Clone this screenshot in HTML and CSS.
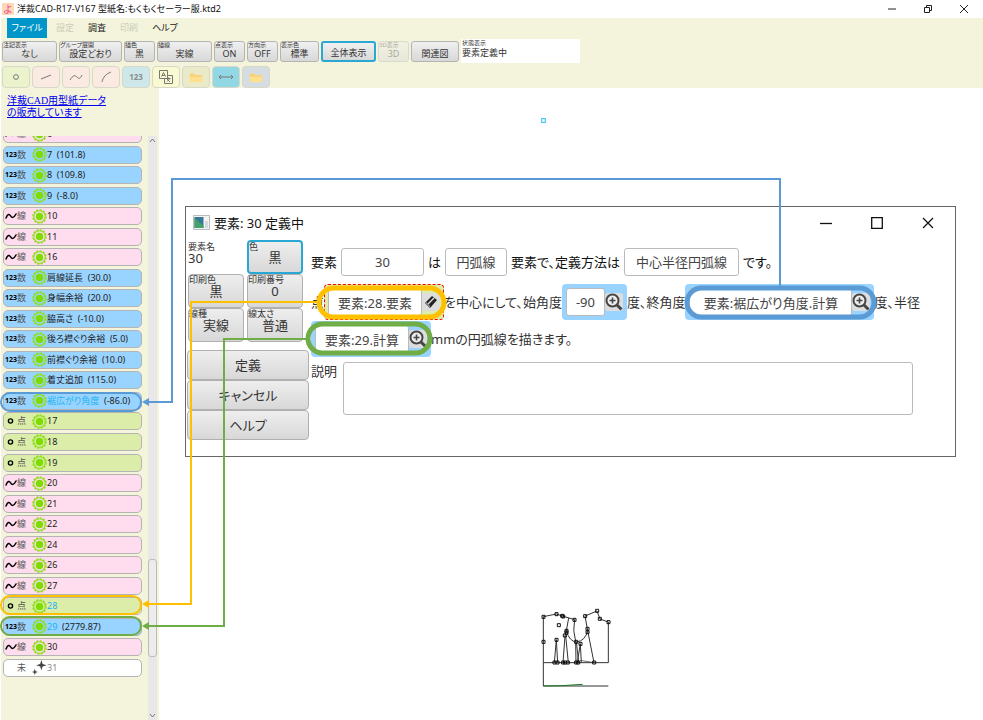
FILE: index.html
```
<!DOCTYPE html>
<html lang="ja">
<head>
<meta charset="utf-8">
<title>洋裁CAD-R17-V167</title>
<link rel="stylesheet" href="styles.css">
</head>
<body>
<svg class="defs" aria-hidden="true">
  <defs>
    <symbol id="gear" viewBox="0 0 16 16">
      <circle cx="8" cy="8" r="7" fill="none" stroke="#8fdf20" stroke-width="1.6" stroke-dasharray="2.200 1.465"/>
      <circle cx="8" cy="8" r="6.1" fill="none" stroke="#8fdf20" stroke-width="1.2"/>
      <circle cx="8" cy="8" r="4" fill="#80dc00"/>
    </symbol>
    <symbol id="wave" viewBox="0 0 12 8">
      <path d="M1 6 C2.6 1.8 4.2 1.6 5.6 3.8 S8.6 6.4 11 2" fill="none" stroke="currentColor" stroke-width="1.5" stroke-linecap="round"/>
    </symbol>
    <symbol id="dot" viewBox="0 0 12 8">
      <circle cx="5.5" cy="4" r="2.1" fill="none" stroke="currentColor" stroke-width="1.4"/>
    </symbol>
    <symbol id="spark" viewBox="0 0 16 16">
      <path d="M10 0 L11.3 4.2 L15.5 5.5 L11.3 6.8 L10 11 L8.7 6.8 L4.5 5.5 L8.7 4.2Z M3 9.4 L3.9 11.9 L6.4 12.8 L3.9 13.7 L3 16 L2.1 13.7 L0 12.8 L2.1 11.9Z" fill="#444"/>
    </symbol>
    <symbol id="zoomin" viewBox="0 0 18 18">
      <circle cx="7.5" cy="7.5" r="6" fill="#eee" stroke="#454545" stroke-width="2"/>
      <path d="M7.5 4.5v6M4.5 7.5h6" stroke="#454545" stroke-width="1.6"/>
      <path d="M12 12l4.5 4.5" stroke="#454545" stroke-width="3"/>
    </symbol>
    <symbol id="folder" viewBox="0 0 16 12">
      <path d="M1 1.500h5l1.2 1.500H14a1 1 0 0 1 1 1V10a1 1 0 0 1-1 1H2a1 1 0 0 1-1-1z" fill="#f8d27a"/>
      <path d="M1 5h14v5a1 1 0 0 1-1 1H2a1 1 0 0 1-1-1z" fill="#ffe08c"/>
    </symbol>
  </defs>
</svg>

<header class="titlebar">
  <span class="logo">よ</span>
  <h1>洋裁CAD-R17-V167 型紙名:もくもくセーラー服.ktd2</h1>
  <div class="wincontrols">
    <button aria-label="最小化"><svg viewBox="0 0 10 10"><path d="M1 5h8"/></svg></button>
    <button aria-label="元に戻す"><svg viewBox="0 0 10 10"><path d="M1.500 3.500h5v5h-5zM3.500 3.500v-2h5v5h-2"/></svg></button>
    <button aria-label="閉じる"><svg viewBox="0 0 10 10"><path d="M1 1l8 8M9 1l-8 8"/></svg></button>
  </div>
</header>

<div class="commands">
  <nav class="menu">
    <button class="current">ファイル</button>
    <button disabled>設定</button>
    <button>調査</button>
    <button disabled>印刷</button>
    <button>ヘルプ</button>
  </nav>
  <div class="options">
    <button class="opt w55"><small>注記表示</small>なし</button>
    <button class="opt w63"><small>グループ展開</small>設定どおり</button>
    <button class="opt w31"><small>描色</small>黒</button>
    <button class="opt w55"><small>描線</small>実線</button>
    <button class="opt w31"><small>点表示</small>ON</button>
    <button class="opt w31"><small>方向示</small>OFF</button>
    <button class="opt w39"><small>表示色</small>標準</button>
    <button class="opt w55 focus">全体表示</button>
    <button class="opt w31" disabled><small>3D表示</small>3D</button>
    <button class="opt w47">関連図</button>
    <div class="status"><small>状態表示</small>要素定義中</div>
  </div>
  <div class="tools">
    <button class="t-green" aria-label="点"><svg viewBox="0 0 20 16"><circle cx="10" cy="8" r="2.400"/></svg></button>
    <button class="t-pink" aria-label="直線"><svg viewBox="0 0 20 16"><path d="M5 10l10-4"/></svg></button>
    <button class="t-pink" aria-label="曲線"><svg viewBox="0 0 20 16"><path d="M4 11c3-5 5-5 7-3s3 2 5-2"/></svg></button>
    <button class="t-pink" aria-label="円弧"><svg viewBox="0 0 20 16"><path d="M6 13c1-5 4-8 9-10"/></svg></button>
    <button class="t-blue">123</button>
    <button class="t-yellow" aria-label="文字"><svg viewBox="0 0 20 16"><path d="M3.500 1.500h8v8h-8zM11.500 6.500h5v8h-8v-5M5.500 7.500l2-4 2 4M6 6.500h3M10.500 9.500h4M12.500 8.500v1M11 12.500l3-3M11 10l3 3"/></svg></button>
    <button class="t-olive" aria-label="開く"><svg><use href="#folder"/></svg></button>
    <button class="t-cyan" aria-label="寸法"><svg viewBox="0 0 20 16"><path d="M3 8h14M5 6L3 8l2 2M15 6l2 2-2 2"/></svg></button>
    <button class="t-gray" aria-label="フォルダー"><svg><use href="#folder"/></svg></button>
  </div>
</div>

<main class="workspace">
  <aside class="sidebar">
    <a class="promo" href="#">洋裁CAD用型紙データ<br>の販売しています</a>
    <div class="listarea">
      <ul class="elements">
        <li class="line"><svg class="kind"><use href="#wave"/></svg><i>線</i><svg class="gear"><use href="#gear"/></svg>6</li>
        <li class="num"><b>123</b><i>数</i><svg class="gear"><use href="#gear"/></svg>7  (101.8)</li>
        <li class="num"><b>123</b><i>数</i><svg class="gear"><use href="#gear"/></svg>8  (109.8)</li>
        <li class="num"><b>123</b><i>数</i><svg class="gear"><use href="#gear"/></svg>9  (-8.0)</li>
        <li class="line"><svg class="kind"><use href="#wave"/></svg><i>線</i><svg class="gear"><use href="#gear"/></svg>10</li>
        <li class="line"><svg class="kind"><use href="#wave"/></svg><i>線</i><svg class="gear"><use href="#gear"/></svg>11</li>
        <li class="line"><svg class="kind"><use href="#wave"/></svg><i>線</i><svg class="gear"><use href="#gear"/></svg>16</li>
        <li class="num"><b>123</b><i>数</i><svg class="gear"><use href="#gear"/></svg>肩線延長  (30.0)</li>
        <li class="num"><b>123</b><i>数</i><svg class="gear"><use href="#gear"/></svg>身幅余裕  (20.0)</li>
        <li class="num"><b>123</b><i>数</i><svg class="gear"><use href="#gear"/></svg>脇高さ  (-10.0)</li>
        <li class="num"><b>123</b><i>数</i><svg class="gear"><use href="#gear"/></svg>後ろ襟ぐり余裕  (5.0)</li>
        <li class="num"><b>123</b><i>数</i><svg class="gear"><use href="#gear"/></svg>前襟ぐり余裕  (10.0)</li>
        <li class="num"><b>123</b><i>数</i><svg class="gear"><use href="#gear"/></svg>着丈追加  (115.0)</li>
        <li class="num"><b>123</b><i>数</i><svg class="gear"><use href="#gear"/></svg><em>裾広がり角度</em>  (-86.0)</li>
        <li class="point"><svg class="kind"><use href="#dot"/></svg><i>点</i><svg class="gear"><use href="#gear"/></svg>17</li>
        <li class="point"><svg class="kind"><use href="#dot"/></svg><i>点</i><svg class="gear"><use href="#gear"/></svg>18</li>
        <li class="point"><svg class="kind"><use href="#dot"/></svg><i>点</i><svg class="gear"><use href="#gear"/></svg>19</li>
        <li class="line"><svg class="kind"><use href="#wave"/></svg><i>線</i><svg class="gear"><use href="#gear"/></svg>20</li>
        <li class="line"><svg class="kind"><use href="#wave"/></svg><i>線</i><svg class="gear"><use href="#gear"/></svg>21</li>
        <li class="line"><svg class="kind"><use href="#wave"/></svg><i>線</i><svg class="gear"><use href="#gear"/></svg>22</li>
        <li class="line"><svg class="kind"><use href="#wave"/></svg><i>線</i><svg class="gear"><use href="#gear"/></svg>24</li>
        <li class="line"><svg class="kind"><use href="#wave"/></svg><i>線</i><svg class="gear"><use href="#gear"/></svg>26</li>
        <li class="line"><svg class="kind"><use href="#wave"/></svg><i>線</i><svg class="gear"><use href="#gear"/></svg>27</li>
        <li class="point"><svg class="kind"><use href="#dot"/></svg><i>点</i><svg class="gear"><use href="#gear"/></svg><em>28</em></li>
        <li class="num"><b>123</b><i>数</i><svg class="gear"><use href="#gear"/></svg><em>29</em>  (2779.87)</li>
        <li class="line"><svg class="kind"><use href="#wave"/></svg><i>線</i><svg class="gear"><use href="#gear"/></svg>30</li>
        <li class="empty"><svg class="kind"></svg><i>未</i><svg class="gear"><use href="#spark"/></svg>31</li>
      </ul>
      <div class="scroll">
        <svg viewBox="0 0 9 9"><path d="M2 6l2.500-3L7 6"/></svg>
        <div class="thumb"></div>
        <svg viewBox="0 0 9 9"><path d="M2 3l2.500 3L7 3"/></svg>
      </div>
    </div>
  </aside>

  <section class="canvas">
    <svg class="marker" viewBox="0 0 5 5"><path d="M.7.7h3.600v3.600H.7z" fill="#fff" stroke="#4cc8f4" stroke-width="1.200"/></svg>
    <svg class="pattern" viewBox="0 0 270 285">
      <g fill="none" stroke="#333" stroke-width="3">
        <path d="M40 50V258H235M40 188H235V66M40 50L79 42L97 48L134 59M165 48L201 33L210 57L235 66M116 54L109 92L105 107M134 59Q127 90 137 125M109 92Q118 125 140 126Q166 122 173 92M165 48L173 92L192 188M79 119L73 188M79 119L83 188M105 107L99 188M107 107L115 188M137 125L138 188M139 125L146 188M151 131L142 188M151 131L154 188"/>
        <path d="M150 181L192 188" stroke-width="2"/>
        <path d="M40 258L95 257L158 253" stroke="#187c22"/>
        <path d="M36 46h9v9h-9zM75 38h9v9h-9zM92 43h9v9h-9zM95 45h9v9h-9zM129 55h9v9h-9zM161 44h9v9h-9zM197 28h9v9h-9zM205 52h9v9h-9zM231 62h9v9h-9zM82 71h9v9h-9zM36 121h9v9h-9zM75 115h9v9h-9zM105 88h9v9h-9zM105 93h9v9h-9zM100 102h9v9h-9zM134 121h9v9h-9zM147 127h9v9h-9zM168 82h9v9h-9zM168 92h9v9h-9zM69 183h9v9h-9zM78 183h9v9h-9zM95 183h9v9h-9zM101 183h9v9h-9zM109 183h9v9h-9zM134 183h9v9h-9zM140 183h9v9h-9zM188 183h9v9h-9z" stroke="#111"/>
      </g>
    </svg>

    <div class="dialog" role="dialog" aria-labelledby="dialog-title">
      <div class="dialog-head">
        <svg class="appicon" viewBox="0 0 17 15"><path fill="#f3f3f3" stroke="#bbb" d="M.5.5h16v14H.5z"/><path fill="#397998" d="M1.500 2h9v11h-9z"/><path fill="#42a267" d="M1.500 3l9 8v2h-9z"/><path fill="#d5dbdf" d="M12 6h3v7h-3z"/></svg>
        <h2 id="dialog-title">要素: 30 定義中</h2>
        <div class="dialog-controls">
          <button aria-label="最小化"><svg viewBox="0 0 12 12"><path d="M0 6.500h12"/></svg></button>
          <button aria-label="最大化"><svg viewBox="0 0 12 12"><path d="M.7.7h10.600v10.600H.7z"/></svg></button>
          <button aria-label="閉じる"><svg viewBox="0 0 12 12"><path d="M1 1l10 10M11 1L1 11"/></svg></button>
        </div>
      </div>
      <div class="dialog-body">
        <div class="panel">
          <div class="settings">
            <div class="name"><small>要素名</small>30</div>
            <button class="focus"><small>色</small>黒</button>
            <button><small>印刷色</small>黒</button>
            <button><small>印刷番号</small>0</button>
            <button><small>線種</small>実線</button>
            <button><small>線太さ</small>普通</button>
          </div>
          <div class="actions">
            <button>定義</button>
            <button>キャンセル</button>
            <button>ヘルプ</button>
          </div>
        </div>
        <form class="definition">
          <div class="sentence head">
            <label for="el-name">要素</label>
            <input id="el-name" class="w-name" value="30">
            <span>は</span>
            <button type="button" class="w-kind">円弧線</button>
            <span>要素で、定義方法は</span>
            <button type="button" class="w-method">中心半径円弧線</button>
            <span>です。</span>
          </div>
          <div class="sentence">
            <label for="center">点</label>
            <span class="ref picked"><input id="center" class="w-ref" value="要素:28.要素"><button type="button" class="pick" aria-label="選択"><svg viewBox="0 0 18 18"><path d="M3 10L10 3l5 4-7 8z" fill="#222"/><path d="M5.500 11.500L12 5" stroke="#ddd" stroke-width="1.500"/><path d="M3 10l5 5v-2.500L4.500 9z" fill="#888"/></svg></button></span>
            <label for="start">を中心にして、始角度</label>
            <span class="ref"><input id="start" class="w-angle" value="-90"><button type="button" class="pick" aria-label="拡大"><svg><use href="#zoomin"/></svg></button></span>
            <label for="end">度、終角度</label>
            <span class="ref"><input id="end" class="w-long" value="要素:裾広がり角度.計算"><button type="button" class="pick" aria-label="拡大"><svg><use href="#zoomin"/></svg></button></span>
            <label for="radius">度、半径</label>
          </div>
          <div class="sentence">
            <span class="ref"><input id="radius" class="w-ref" value="要素:29.計算"><button type="button" class="pick" aria-label="拡大"><svg><use href="#zoomin"/></svg></button></span>
            <span>mmの円弧線を描きます。</span>
          </div>
          <div class="note">
            <label for="note">説明</label>
            <textarea id="note"></textarea>
          </div>
        </form>
      </div>
    </div>
  </section>
</main>

<svg class="links" viewBox="0 0 983 720" aria-hidden="true">
  <g fill="none" stroke="#5b9bd5">
    <rect x="687" y="288" width="187" height="29" rx="14.500" stroke-width="5"/>
    <rect x="1" y="393" width="140" height="18" rx="9" stroke-width="2"/>
    <path d="M780 286V179H172V402H147" stroke-width="2"/>
    <path d="M142 402l7-4v8z" fill="#5b9bd5" stroke="none"/>
  </g>
  <g fill="none" stroke="#ffc000">
    <rect x="319" y="288" width="125" height="29" rx="14.500" stroke-width="5"/>
    <rect x="1" y="596" width="140" height="18" rx="9" stroke-width="2"/>
    <path d="M317 302H191V604H147" stroke-width="2"/>
    <path d="M142 604l7-4v8z" fill="#ffc000" stroke="none"/>
  </g>
  <g fill="none" stroke="#70ad47">
    <rect x="308" y="324" width="122" height="29" rx="14.500" stroke-width="5"/>
    <rect x="1" y="617" width="140" height="18" rx="9" stroke-width="2"/>
    <path d="M307 339H224V626H147" stroke-width="2"/>
    <path d="M142 626l7-4v8z" fill="#70ad47" stroke="none"/>
  </g>
</svg>
</body>
</html>
```
FILE: styles.css
```
* { box-sizing: border-box; }

body {
  margin: 0;
  min-height: 100vh;
  display: flex;
  flex-direction: column;
  position: relative;
  overflow: hidden;
  background: #fff;
  color: #222;
  font: 9px/12px "Noto Sans", "Noto Sans CJK JP", sans-serif;
  font-feature-settings: "palt";
}

button, input, textarea {
  font: inherit;
  font-feature-settings: inherit;
  color: inherit;
  margin: 0;
  padding: 0;
}

h1, h2 { margin: 0; font-weight: 400; }
i, em { font-style: normal; }
svg { display: block; flex: none; }
.defs { position: absolute; width: 0; height: 0; }

/* Title bar */
.titlebar {
  display: flex;
  align-items: center;
  gap: 3px;
  height: 18px;
  padding-left: 2px;
}
.titlebar h1 { font-size: 9px; line-height: 18px; color: #111; }
.logo {
  width: 12px;
  height: 12px;
  background: #ffd9b8;
  color: #f0508c;
  font-size: 10px;
  text-align: center;
}
.wincontrols { display: flex; gap: 26px; margin-left: auto; padding-right: 14px; }
.wincontrols button, .dialog-controls button { border: 0; background: none; }
.wincontrols svg { width: 10px; height: 10px; fill: none; stroke: #222; }

/* Menu and toolbars */
.commands { height: 70px; background: #f4f4dc; margin-left: 1px; }
.menu { display: flex; padding-left: 6px; }
.menu button {
  height: 20px;
  padding: 0 7px;
  border: 0;
  background: none;
  white-space: nowrap;
}
.menu button:disabled { color: #ccccb8; }
.menu .current { background: #0096c9; color: #fff; width: 40px; padding: 0; margin-right: 2px; }

.options { display: flex; align-items: center; gap: 2px; height: 24px; margin-top: 1px; padding-left: 1px; }
.opt {
  position: relative;
  height: 21px;
  padding-top: 4px;
  border: 1px solid #b4b4b4;
  border-radius: 3px;
  background: linear-gradient(#f0f0f0, #d8d8d8);
  color: #333;
  line-height: 9px;
  white-space: nowrap;
}
.opt small, .settings small {
  position: absolute;
  top: 0;
  left: 0;
  font-size: 6px;
  line-height: 6px;
}
.opt:disabled { opacity: .4; }
.focus { border: 2px solid #2aa8d4; }
.opt.focus { padding-top: 2px; }
.w31 { width: 31px; }
.w39 { width: 39px; }
.w47 { width: 48px; }
.w55 { width: 55px; }
.w63 { width: 63px; }
.status {
  width: 119px;
  height: 24px;
  padding: 1px;
  background: #fff;
  color: #333;
  line-height: 11px;
}
.status small { display: block; font-size: 6px; line-height: 7px; }

.tools { display: flex; gap: 2px; padding: 3px 1px; }
.tools button {
  width: 28px;
  height: 22px;
  display: grid;
  place-items: center;
  border: 1px solid #d8d8c8;
  border-radius: 4px;
  color: #8a8f8c;
  font-size: 8px;
  font-weight: 700;
}
.tools svg { width: 20px; height: 16px; fill: none; stroke: #777; }
.tools svg:has(use) { width: 14px; height: 11px; stroke: none; }
.t-green { background: #ebf3cc; }
.t-pink { background: #faeae2; }
.t-blue { background: #cde7ea; }
.t-yellow { background: #fafad2; }
.t-olive { background: #eaeac8; }
.t-cyan { background: #92d8e4; }
.t-gray { background: #d5dde3; }

/* Sidebar */
.workspace { flex: 1; display: flex; min-height: 0; }
.sidebar {
  width: 158px;
  margin-left: 1px;
  display: flex;
  flex-direction: column;
  background: #f4f4dc;
}
.promo {
  height: 48px;
  padding: 7px 6px;
  color: #00e;
  font-family: "Liberation Serif", "Noto Sans CJK JP", serif;
  font-size: 10px;
  line-height: 12px;
}
.listarea { flex: 1; display: flex; justify-content: space-between; overflow: hidden; min-height: 0; }
.elements {
  list-style: none;
  margin: -11px 0 0;
  padding: 0 0 43px 2px;
  width: 141px;
  display: flex;
  flex-direction: column;
  justify-content: space-between;
}
.elements li {
  display: flex;
  align-items: center;
  height: 18px;
  border: 1px solid #b4b4b4;
  border-radius: 5px;
  padding-left: 1px;
  white-space: pre;
}
.elements .num { background: #99d3ff; }
.elements .line { background: #ffdcee; }
.elements .point { background: #dcedaa; }
.elements .empty { background: #fff; color: #888; }
.elements b { width: 12px; font-size: 7px; color: #000; }
.elements i { width: 15px; font-size: 9px; color: #555; }
.elements em { color: #1cb4f0; }
.kind { width: 12px; height: 8px; color: #000; }
.gear { width: 15px; height: 15px; }

.scroll {
  width: 9px;
  margin-right: 2px;
  display: flex;
  flex-direction: column;
  justify-content: space-between;
  background: #e8e8e8;
}
.scroll svg { width: 9px; height: 9px; fill: none; stroke: #777; }
.thumb {
  height: 98px;
  margin-top: 360px;
  border: 1px solid #bbb;
  border-radius: 3px;
  background: #ececec;
}

/* Drawing canvas */
.canvas { flex: 1; position: relative; }
.marker { position: absolute; left: 382px; top: 30px; width: 5px; height: 5px; }
.pattern { position: absolute; left: 371px; top: 512px; width: 90px; height: 95px; }

/* Definition dialog */
.dialog {
  position: absolute;
  left: 26px;
  right: 27px;
  top: 118px;
  min-height: 251px;
  border: 1px solid #666;
  background: #fff;
  font-size: 13px;
  line-height: 18px;
}
.dialog-head { display: flex; align-items: center; gap: 4px; height: 31px; padding: 0 21px 0 7px; }
.dialog-head h2 { font-size: 13px; color: #111; }
.appicon { width: 17px; height: 15px; }
.dialog-controls { display: flex; gap: 39px; margin-left: auto; }
.dialog-controls svg { width: 12px; height: 12px; fill: none; stroke: #111; stroke-width: 1.3; }
.dialog-body { display: flex; }
.panel { flex: none; width: 124px; padding: 2px 1px; color: #333; }
.settings { display: grid; grid-template-columns: 56px 56px; grid-auto-rows: 34px; gap: 0 3px; padding-left: 1px; }
.settings small { font-size: 9px; line-height: 10px; }
.settings button, .actions button {
  position: relative;
  border: 1px solid #b0b0b0;
  border-radius: 4px;
  background: linear-gradient(#eee, #d8d8d8);
}
.settings .focus { border: 2px solid #2aa8d4; }
.settings .name { position: relative; padding-top: 10px; line-height: 16px; }
.settings .name small { top: 2px; }
.actions { display: flex; flex-direction: column; margin-top: 8px; }
.actions button { height: 30px; }

.definition { flex: 1; padding: 10px 42px 0 1px; color: #333; }
.sentence { display: flex; align-items: center; height: 36px; margin-bottom: 1px; white-space: nowrap; }
.sentence.head { height: 28px; margin-bottom: 8px; gap: 4px; color: #111; }
.sentence input, .sentence.head button {
  height: 28px;
  border: 1px solid #bbb;
  border-radius: 3px;
  background: #fff;
  color: #444;
  text-align: center;
}
.w-name { width: 83px; }
.sentence .w-kind { width: 62px; }
.sentence .w-method { width: 115px; }
.ref { display: flex; align-items: center; height: 36px; padding: 4px; background: #99d3ff; border-radius: 4px; }
.picked { background: #dcedaa; border: 1px dashed #f00; padding: 3px; }
.w-ref { width: 94px; }
.w-angle { width: 39px; }
.w-long { width: 163px; }
.pick {
  width: 18px;
  height: 18px;
  border: 0;
  border-radius: 3px;
  background: #ddd;
}
.pick svg { width: 18px; height: 18px; }
.note { display: flex; gap: 6px; margin: 5px 0 0; }
.note textarea { flex: 0 1 570px; height: 53px; border: 1px solid #bbb; border-radius: 3px; resize: none; }

/* Connectors drawn over the windows */
.links { position: absolute; left: 0; top: 0; width: 983px; height: 720px; pointer-events: none; }
```
